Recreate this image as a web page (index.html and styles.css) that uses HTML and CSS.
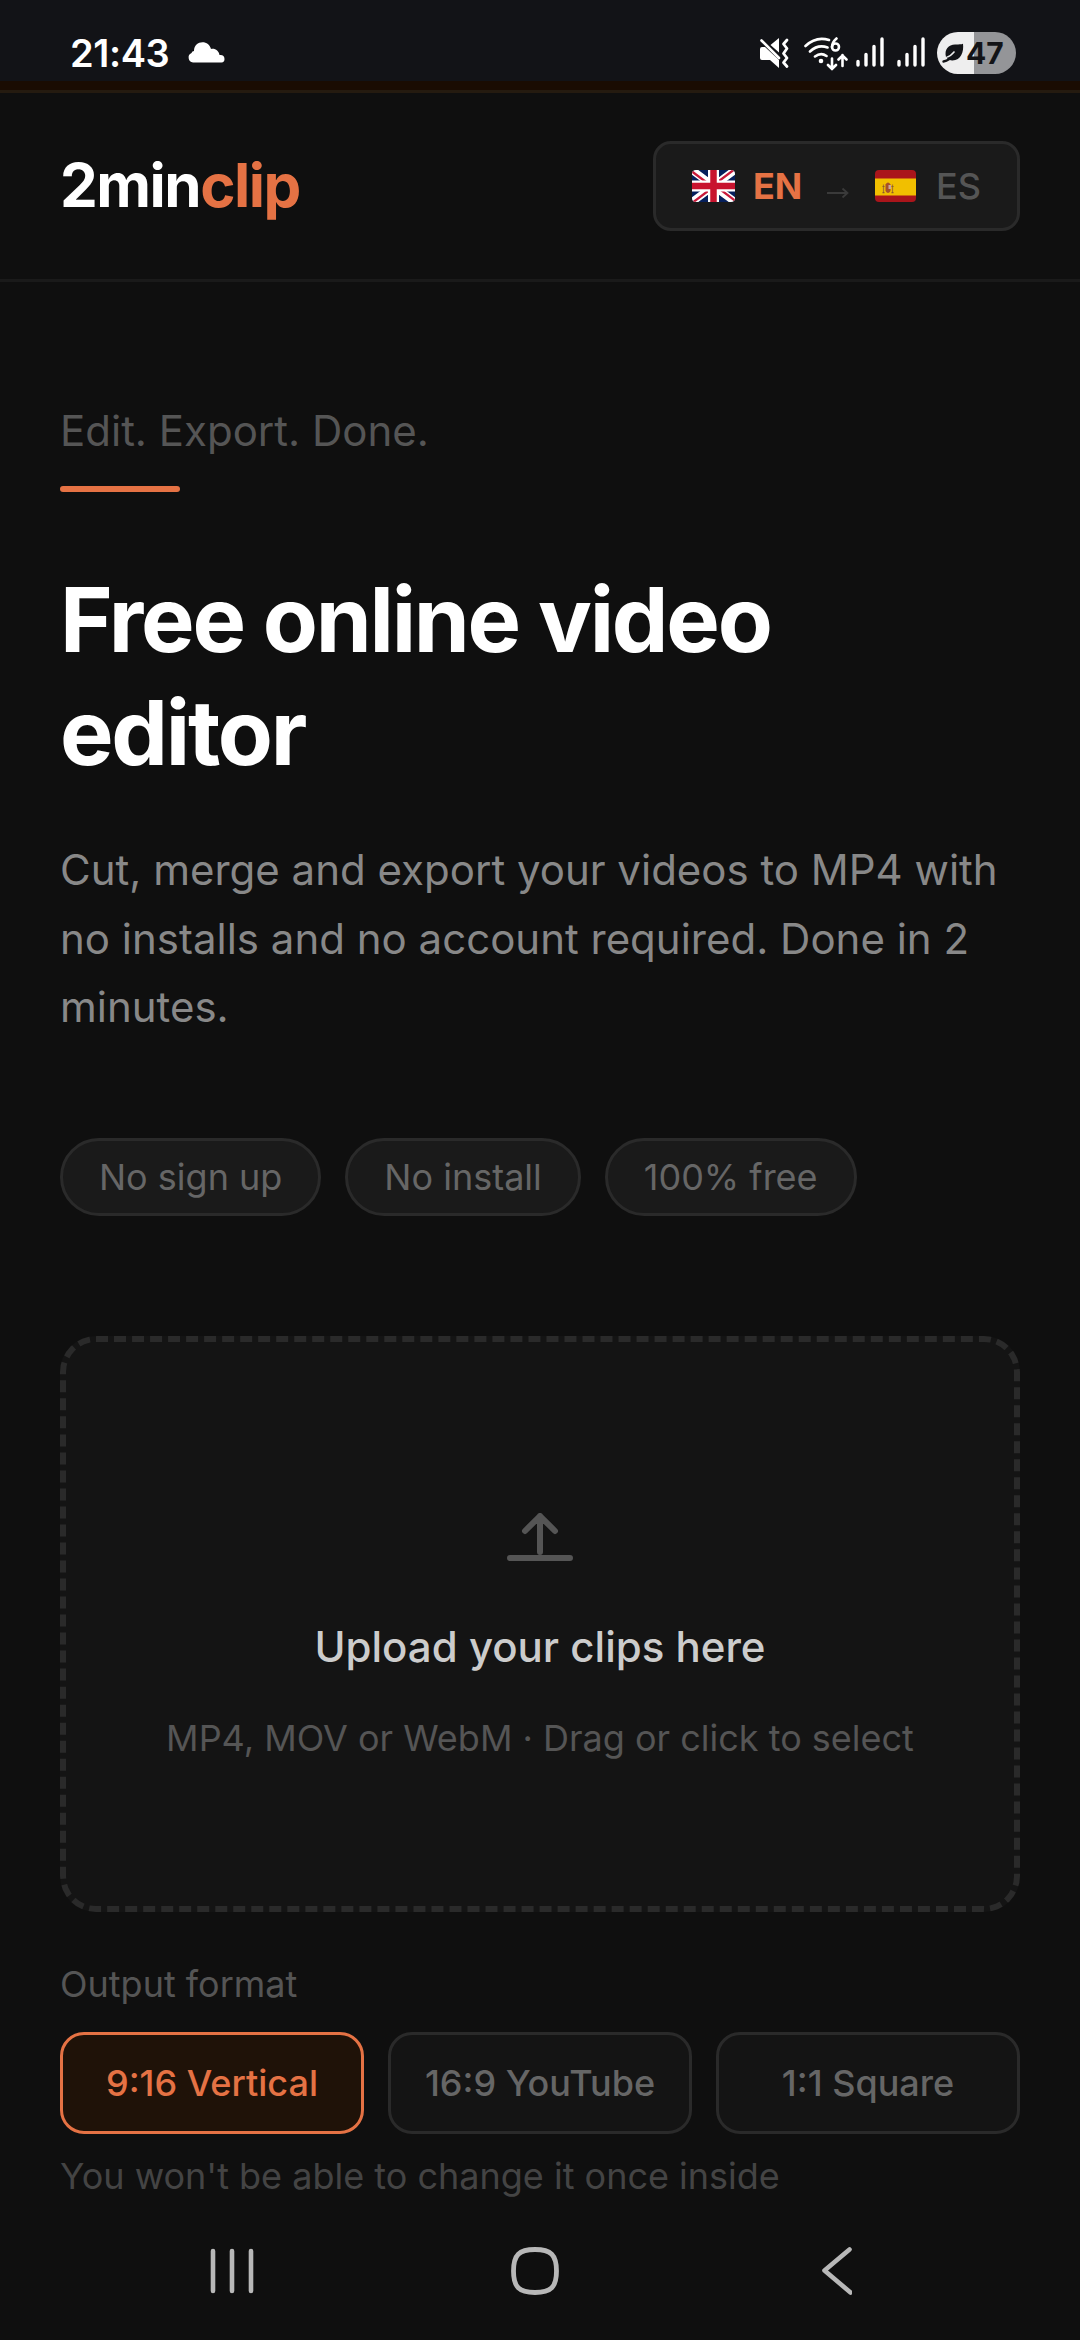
FILE: index.html
```html
<!DOCTYPE html>
<html lang="en">
<head>
<meta charset="utf-8">
<title>2minclip</title>
<link rel="stylesheet" href="styles.css">
</head>
<body>
<div class="statusbar">
  <span class="clock">21:43</span>
  <svg class="cloud" width="37" height="21" viewBox="0 0 37 21"><path fill="#fff" d="M5 20.500a5 5 0 0 1-1.500-9.500 3 3 0 0 1 2.500-2C6 3.500 10 .3 14.500.3c4 0 7.500 2.500 8.500 6.700 4-1 8 2 8.500 6 3-.5 5 1 5 4 0 2-1 3.500-3 3.500z"/></svg>
  <div class="indicators">
    <svg class="mute" width="31" height="31" viewBox="0 0 31 31">
      <path fill="#fff" d="M1 11q0-2 2-2h3l14 13v8l-9-8H3q-2 0-2-2zM11.500 7 20 0v14.500z"/>
      <path d="M2.500 2.500 20 20" stroke="#fff" stroke-width="2.600" stroke-linecap="round"/>
      <path d="m28 2-3.500 4 3.500 4.500-3.500 5 3.500 4.500-3.500 4.500 3.500 4" fill="none" stroke="#fff" stroke-width="2.800" stroke-linecap="round" stroke-linejoin="round"/>
    </svg>
    <svg class="wifi" width="44" height="34" viewBox="0 0 44 34">
      <g fill="none" stroke="#fff" stroke-width="2.600" stroke-linecap="round">
        <path d="M1.500 9Q12 -1 25 3M6 14.500Q14 7 23.500 10.500M11 19.500q6-4.500 11.500-.5"/>
        <path d="M32.500 1.500q-4.500 4-4.500 8.500M28 32V21.500m-4 6.500 4 4 4-4M38.500 29V18m-4 4.500 4-4 4 4"/>
        <circle cx="31.500" cy="10" r="3.500"/>
      </g>
      <circle cx="17" cy="24" r="2.300" fill="#fff"/>
    </svg>
    <svg class="signal" width="28" height="30" viewBox="0 0 28 30"><path d="M2 24.500v3.500M10 17.500v10.500M18 9.500v18.500M26 2v26" stroke="#fff" stroke-width="3.400" stroke-linecap="round"/></svg>
    <svg class="signal signal-b" width="28" height="30" viewBox="0 0 28 30"><path d="M2 24.500v3.500M10 17.500v10.500M18 9.500v18.500M26 2v26" stroke="#fff" stroke-width="3.400" stroke-linecap="round"/></svg>
    <div class="battery">
      <svg width="22" height="20" viewBox="0 0 22 20"><path fill="#131417" d="M4 14C2 6 7 1 14 1.500c3 0 5 0 7-.7 1 8-2 17-11 16.700-1.500 0-3-.5-4-1.200z"/><path d="M1.500 18.500C6 18 11 13 14 9" fill="none" stroke="#131417" stroke-width="2.400" stroke-linecap="round"/><path d="M4 14.500Q9 13 12.500 8.500" fill="none" stroke="#eee" stroke-width="1.300"/></svg>
      <span>47</span>
    </div>
  </div>
</div>
<div class="notice"></div>
<header class="header">
  <div class="logo">2min<span>clip</span></div>
  <div class="lang">
    <svg class="flag-uk" width="43" height="32" viewBox="0 0 43 32">
      <clipPath id="uk"><rect width="43" height="32" rx="4"/></clipPath>
      <g clip-path="url(#uk)">
        <rect width="43" height="32" fill="#06205c"/>
        <path d="M0 0 43 32M43 0 0 32" stroke="#fff" stroke-width="7.500"/>
        <path d="M0 1.500 18 15M43 30.500 25 17M41.500 0 25 12.500M1.500 32 18 19.500" stroke="#c8193a" stroke-width="2.200"/>
        <path d="M21.500 0v32M0 16h43" stroke="#fff" stroke-width="11"/>
        <path d="M21.500 0v32M0 16h43" stroke="#c8142f" stroke-width="6.500"/>
      </g>
    </svg>
    <span class="on">EN</span>
    <svg class="arrow" width="22" height="12" viewBox="0 0 22 12"><path d="M0 6h20M15.500 1.500 20.500 6l-5 4.500" fill="none" stroke="#3a3a3a" stroke-width="1.800"/></svg>
    <svg class="flag-es" width="41" height="32" viewBox="0 0 41 32">
      <clipPath id="es"><rect width="41" height="32" rx="4"/></clipPath>
      <g clip-path="url(#es)">
        <rect width="41" height="32" fill="#aa151b"/>
        <rect y="8.500" width="41" height="17" fill="#f1bf00"/>
        <path d="M8.500 14.500v8M17.500 14.500v8" stroke="#a8752a" stroke-width="1.200"/>
        <path d="M10.500 14.500q2.500-4 5 0v6.500q-2.500 4-5 0z" fill="#a5502a"/>
        <path d="M13.500 15h2.500v4h-2.500z" fill="#c9a7a0"/>
        <path d="M7.500 22.700h2m7 0h2M7.500 16.500h2m7 0h2" stroke="#8d5a2c" stroke-width="1.200"/>
      </g>
    </svg>
    <span class="off">ES</span>
  </div>
</header>
<main class="main">
  <p class="tagline">Edit. Export. Done.</p>
  <div class="accent"></div>
  <h1>Free online video editor</h1>
  <p class="lead">Cut, merge and export your videos to MP4 with no installs and no account required. Done in 2 minutes.</p>
  <div class="pills"><span>No sign up</span><span>No install</span><span>100% free</span></div>
  <section class="dropzone">
    <svg width="66" height="48" viewBox="0 0 66 48"><path d="M3 45h60M33 39V3M18 18 33 3l15 15" fill="none" stroke="#555" stroke-width="6" stroke-linecap="round" stroke-linejoin="round"/></svg>
    <p class="drop-title">Upload your clips here</p>
    <p class="drop-sub">MP4, MOV or WebM · Drag or click to select</p>
  </section>
  <p class="label">Output format</p>
  <div class="formats">
    <button class="active">9:16 Vertical</button><button>16:9 YouTube</button><button>1:1 Square</button>
  </div>
  <p class="note">You won't be able to change it once inside</p>
</main>
<nav class="navbar">
  <svg width="44" height="48" viewBox="0 0 44 48"><path d="M3 4v40M22 4v40M41 4v40" stroke="#b8b8b8" stroke-width="4.600" stroke-linecap="round"/></svg>
  <svg width="48" height="48" viewBox="0 0 48 48"><path d="M24 2.500C40 2.500 45.500 8 45.500 24S40 45.500 24 45.500 2.500 40 2.500 24 8 2.500 24 2.500z" fill="none" stroke="#b8b8b8" stroke-width="4.800"/></svg>
  <svg width="30" height="48" viewBox="0 0 30 48"><path d="M27.500 2.500 2.500 23.500l26 22" fill="none" stroke="#b8b8b8" stroke-width="4.600" stroke-linecap="round" stroke-linejoin="round"/></svg>
</nav>
</body>
</html>
```
FILE: styles.css
```css
* { box-sizing: border-box; margin: 0; padding: 0; }
body { width: 1080px; height: 2340px; overflow: hidden; background: #0f0f0f; color: #fff; font-family: Inter, sans-serif; }
svg { display: block; flex: none; }

.statusbar { height: 81px; background: #121317; display: flex; align-items: flex-start; padding: 28px 64px 0 70px; }
.clock { font-size: 38px; font-weight: 600; line-height: 50px; width: 118px; letter-spacing: -0.400px; white-space: nowrap; }
.cloud { margin-top: 14px; }
.indicators { display: flex; align-items: flex-start; margin-left: auto; }
.mute { margin-top: 10px; }
.wifi { margin: 9px 0 0 14px; }
.signal { margin: 9px 0 0 8px; }
.signal-b { margin-left: 13px; }
.battery { display: flex; align-items: center; width: 79px; height: 42px; margin: 4px 0 0 12px; padding-left: 5px; border-radius: 21px; background: linear-gradient(90deg, #eee 37px, #949598 37px); color: #131417; }
.battery span { font-size: 30px; font-weight: 700; line-height: 42px; margin-left: 2px; }

.notice { height: 12px; background: #1a0c02; border-bottom: 3px solid #251b10; }

.header { height: 189px; display: flex; align-items: center; justify-content: space-between; padding: 0 60px; border-bottom: 3px solid #1a1a1a; }
.logo { font-size: 60px; font-weight: 700; letter-spacing: -1.500px; line-height: 72px; padding-bottom: 2px; }
.logo span { color: #e57244; }
.lang { display: flex; align-items: center; width: 367px; height: 90px; padding-left: 36px; background: #1a1a1a; border: 3px solid #2a2a2a; border-radius: 18px; font-size: 36px; line-height: 44px; }
.on { color: #e57244; font-weight: 700; width: 74px; margin-left: 18px; }
.arrow { margin: 13px 26px 0 0; }
.off { color: #555; font-weight: 500; margin-left: 20px; }

.main { height: 1922px; padding: 124px 60px 0; }
.tagline { font-size: 42px; line-height: 50px; color: #555; }
.accent { width: 120px; height: 6px; margin-top: 30px; border-radius: 3px; background: #e57244; }
h1 { margin-top: 71px; font-size: 90px; font-weight: 700; line-height: 113px; letter-spacing: -2.250px; }
.lead { margin-top: 47px; font-size: 42px; line-height: 68.600px; color: #888; }
.pills { display: flex; gap: 24px; margin-top: 96px; }
.pills span { height: 78px; padding: 0 36px; border: 3px solid #2a2a2a; border-radius: 39px; background: #1a1a1a; color: #666; font-size: 36px; line-height: 72px; white-space: nowrap; }
.dropzone { height: 576px; margin-top: 120px; padding-top: 171px; display: flex; flex-direction: column; align-items: center; border: 6px dashed #2a2a2a; border-radius: 36px; background: #141414; }
.drop-title { margin-top: 61px; font-size: 42px; font-weight: 500; line-height: 50px; color: #ccc; }
.drop-sub { margin-top: 44px; font-size: 36px; line-height: 44px; color: #555; }
.label { margin-top: 50px; font-size: 36px; line-height: 44px; color: #555; }
.formats { display: grid; grid-template-columns: repeat(3, 1fr); gap: 24px; margin-top: 26px; }
.formats button { height: 102px; border: 3px solid #2a2a2a; border-radius: 24px; background: #141414; color: #666; font: 500 36px/44px Inter, sans-serif; }
.formats .active { border-color: #e57244; background: #1f1208; color: #e57244; }
.note { margin-top: 20px; font-size: 36px; line-height: 44px; color: #444; }

.navbar { height: 134px; display: grid; grid-template-columns: repeat(3, 302.500px); padding-left: 81px; place-items: center; }
```
